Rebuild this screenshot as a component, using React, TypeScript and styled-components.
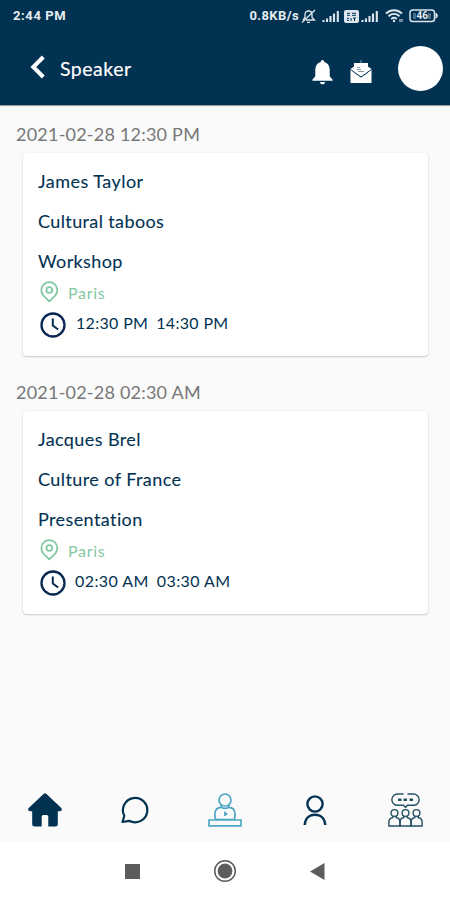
import React from "react";
import styled, { createGlobalStyle } from "styled-components";

const NAVY = "#023252";
const GREEN = "#82c9a2";

const GlobalStyle = createGlobalStyle`
  * { box-sizing: border-box; }
  body { margin: 0; background: #fafafa; }
  svg { display: block; flex: none; }
`;

const Screen = styled.div`
  width: 450px;
  height: 900px;
  display: flex;
  flex-direction: column;
  background: #fafafa;
  font-family: Lato, "Noto Sans", sans-serif;
  color: ${NAVY};
  overflow: hidden;
`;

const Header = styled.header`
  height: 105px;
  background: ${NAVY};
  color: #fff;
  box-shadow: 0 1px 1px rgba(0, 0, 0, 0.35);
  flex: none;
`;

const StatusBar = styled.div`
  height: 32px;
  padding: 0 12px 0 13px;
  display: flex;
  align-items: center;
  justify-content: space-between;
  font: 700 13px/32px Roboto, sans-serif;
  letter-spacing: 0.6px;
  color: #e6eef3;
`;

const StatusIcons = styled.div`
  display: flex;
  align-items: center;
`;

const NetworkSpeed = styled.span`
  letter-spacing: 0.4px;
  margin-right: 1px;
`;

const SignalGroup = styled.div`
  display: flex;
  align-items: center;
  gap: 2px;
  margin: 0 6px 0 5px;
`;

const WifiGroup = styled.div`
  margin-right: 5px;
`;

const Toolbar = styled.div`
  height: 73px;
  padding: 0 7px 0 30px;
  display: flex;
  align-items: center;
`;

const Title = styled.h1`
  margin: 0 0 0 15px;
  flex: 1;
  font-size: 19.5px;
  font-weight: 400;
  line-height: 24px;
  letter-spacing: 0.5px;
  -webkit-text-stroke: 0.15px #fff;
`;

const Actions = styled.div`
  display: flex;
  align-items: center;
  gap: 17px;
  padding: 7px 26px 0 0;
`;

const Avatar = styled.div`
  width: 45px;
  height: 45px;
  border-radius: 50%;
  background: #fff;
`;

const BackButton = styled.div`
  padding-bottom: 3px;
`;

const Sessions = styled.main`
  flex: 1;
  padding-top: 17px;
`;

const Session = styled.section`
  height: 258px;
`;

const DateLabel = styled.div`
  height: 31px;
  padding-left: 16px;
  font-size: 18px;
  line-height: 24px;
  letter-spacing: 0.22px;
  color: #777;
`;

const Card = styled.article`
  height: 203px;
  margin: 0 22px 0 23px;
  padding: 8px 15px 0;
  background: #fff;
  border-radius: 4px;
  box-shadow: 0 1px 2px rgba(0, 0, 0, 0.2), 0 0 2px rgba(0, 0, 0, 0.06);
`;

const CardLine = styled.div<{ $spacing: number }>`
  height: 40px;
  font-size: 18px;
  line-height: 40px;
  letter-spacing: ${(p) => p.$spacing}px;
  -webkit-text-stroke: 0.1px ${NAVY};
`;

const Place = styled.div`
  height: 22px;
  display: flex;
  align-items: center;
  gap: 8px;
  padding-left: 1px;
  color: ${GREEN};
  font-size: 16px;
  letter-spacing: 0.7px;
`;

const Times = styled.div<{ $spacing: number; $indent: number }>`
  height: 44px;
  display: flex;
  align-items: center;
  padding-left: 2px;
  font-size: 16px;
  line-height: 20px;
  letter-spacing: ${(p) => p.$spacing}px;
  white-space: nowrap;

  span { margin: 0 0 4px ${(p) => p.$indent}px; }
  span + span { margin-left: 8px; }
`;

const TabBar = styled.nav`
  height: 62px;
  padding-bottom: 2px;
  display: grid;
  grid-template-columns: repeat(5, 1fr);
  place-items: center;
  flex: none;
`;

const SystemBar = styled.footer`
  height: 58px;
  display: flex;
  align-items: center;
  justify-content: center;
  gap: 73px;
  padding-right: 1px;
  background: #fff;
  color: #5c5c5c;
  flex: none;
`;

const Signal = () => (
  <svg width="18" height="13" viewBox="0 0 18 13" stroke="#dce6ec" strokeWidth="2.1">
    <path d="M1.5 12V10M5 12V8.5M8.5 12V6M12 12V3.5M15.8 12V1" />
  </svg>
);

const MutedBell = () => (
  <svg width="17" height="15" viewBox="0 0 17 15" fill="none" stroke="#dce6ec" strokeWidth="1.3">
    <path d="M3 11 5 8.500V5.500C5 3.500 6.500 2 8.500 2S12 3.500 12 5.500v3l2.500 2.500H6M7 13.300h3M2 13.500 15 1" />
  </svg>
);

const SimBadge = () => (
  <svg width="15" height="13" viewBox="0 0 15 13">
    <rect width="15" height="13" rx="2" fill="#dce6ec" />
    <path d="M3 3.300h3M3 5.300h3M8 3.300h4M8 5.300h4M3 8.300h2M3 10.300h2M7 8v3M9 8h3M10.500 8v3" stroke={NAVY} strokeWidth="1" />
  </svg>
);

const Wifi = () => (
  <svg width="19" height="14" viewBox="0 0 19 14" fill="none" stroke="#dce6ec" strokeWidth="1.9">
    <path d="M1 4.500C5.700.2 12.300.2 17 4.500M3.500 7.300c3.300-3 7.700-3 11 0M6.200 10c1.800-1.500 3.800-1.500 5.600 0" />
    <circle cx="9" cy="12" r="1.200" fill="#dce6ec" stroke="none" />
    <path d="M15 10v3M17 10v3" strokeWidth="1" />
  </svg>
);

const Battery = () => (
  <svg width="29" height="14" viewBox="0 0 29 14">
    <rect x="1" y="1" width="24.500" height="11.500" rx="2.800" fill="none" stroke="#dce6ec" strokeWidth="1.500" />
    <path d="M27 4.200c1.700.8 1.700 4.200 0 5z" fill="#dce6ec" stroke="#dce6ec" />
    <path d="M4 4h3v6H4zM19 4h3v6h-3z" fill="#b5c7d3" opacity=".4" />
    <text x="13.200" y="10.300" textAnchor="middle" fontFamily="Roboto, sans-serif" fontSize="10" fontWeight="700" letterSpacing="0" fill="#e6eef3">46</text>
  </svg>
);

const BackIcon = () => (
  <svg width="15" height="24" viewBox="0 0 15 24" fill="none" stroke="#fff" strokeWidth="4">
    <path d="M13.300 2 3.300 12l10 10" />
  </svg>
);

const BellIcon = () => (
  <svg width="21" height="25" viewBox="0 0 21 26" fill="#fff">
    <path d="M10.500 0c1.200 0 1.800.8 1.800 2.100 3.700 1 5.700 4 5.700 7.900v6.800l3 3.700v1.200H0v-1.200l3-3.700V10c0-3.900 2-6.900 5.700-7.900C8.700.8 9.300 0 10.500 0zM8 22.800h5c0 1.600-1 2.500-2.500 2.500S8 24.400 8 22.800z" />
  </svg>
);

const MailIcon = () => (
  <svg width="22" height="24" viewBox="0 0 22 24">
    <path d="M.5 9 4 6.500V13l7 4.500 7-4.500V6.500L21.500 9v14H.5z" fill="#fff" />
    <path d="M4 3h14v10l-7 4.500L4 13z" fill="#fff" />
    <path d="M10.500 0h1v3h-1z" fill="#8aa0b0" />
    <path d="M.5 9.500 11 17 21.500 9.500" fill="none" stroke={NAVY} strokeWidth="1" />
    <path d="M7 7.500h3M7 9.500h4M8 11.500h6" stroke="#8296a3" strokeWidth="1" />
  </svg>
);

const PinIcon = () => (
  <svg width="21" height="22" viewBox="0 0 21 22" fill="none" stroke={GREEN} strokeWidth="1.800">
    <path d="M10.300 20.300 4.200 14.300a8 8 0 1 1 12.200 0z" strokeLinejoin="round" />
    <circle cx="10.300" cy="9" r="2.900" />
  </svg>
);

const ClockIcon = () => (
  <svg width="26" height="26" viewBox="0 0 26 26" fill="none" stroke="#082851">
    <circle cx="13" cy="13" r="11.500" strokeWidth="2.300" />
    <path d="M12.800 6.500v7l5.400 4" strokeWidth="2" />
  </svg>
);

const HomeIcon = () => (
  <svg width="34" height="34" viewBox="0 0 34 34" fill={NAVY}>
    <path d="M15.500.9Q17-.4 18.500.9L33 14.800q1.500 1.500.4 2.700-.7.8-2 .7h-1.600V31q0 2.500-2.500 2.500h-7v-9.700q0-1.700-1.700-1.700h-3.200q-1.700 0-1.700 1.700v9.700h-7Q4.200 33.500 4.200 31V18.200H2.600q-1.300.1-2-.7-1.100-1.200.4-2.700z" />
  </svg>
);

const ChatIcon = () => (
  <svg width="28" height="28" viewBox="0 0 28 28" fill="none" stroke={NAVY} strokeWidth="2.200">
    <path d="M3.300 19.800A12.200 12.200 0 1 1 8.200 24.800L1.500 26z" strokeLinejoin="round" />
  </svg>
);

const SpeakerIcon = () => (
  <svg width="34" height="34" viewBox="0 0 34 34" fill="none" stroke="#4da6c6" strokeWidth="1.700">
    <circle cx="17" cy="7" r="6" />
    <path d="M13.200 11.800v2.500c-4 .1-6 2.200-6.300 6.200 0 2.400-.3 4.800 1.100 6.200h18c1.400-1.400 1.100-3.800 1.100-6.200-.3-4-2.300-6.100-6.300-6.200v-2.500M13 14c2.300 1.700 5.700 1.700 8 0M1 27h32v5.800H1z" />
    <path d="M17 18.500v4.500M18.500 20v2" />
  </svg>
);

const PersonIcon = () => (
  <svg width="24" height="31" viewBox="0 0 24 31" fill="none" stroke={NAVY} strokeWidth="2.400">
    <circle cx="12" cy="9" r="7.600" />
    <path d="M1.700 30c.4-6.500 4.700-10.200 10.300-10.200S21.900 23.500 22.300 30" />
  </svg>
);

const AudienceIcon = () => (
  <svg width="35" height="34" viewBox="0 0 35 34" fill="none" stroke="#245064" strokeWidth="1.400">
    <path d="M15.500 1H9.500a5.300 5.300 0 0 0 0 11.300h6l2 2.200 2-2.200h6A5.300 5.300 0 0 0 25.500 1h-6" />
    <path d="M10 6.700h3.500M15.500 6.700H19M21.500 6.700H25" strokeWidth="2.400" />
    {[6.5, 17.5, 28.5].map((x) => (
      <g key={x} transform={`translate(${x} 0)`}>
        <circle cx="0" cy="20" r="3.400" />
        <path d="M-1.600 23v1.500c-2.500.5-4 2.200-4 4.500v4H5.600v-4c0-2.300-1.500-4-4-4.500V23" />
      </g>
    ))}
  </svg>
);

type SessionItem = {
  date: string;
  lines: { text: string; spacing: number }[];
  times: string[];
  timeSpacing: number;
  indent: number;
};

const sessions: SessionItem[] = [
  {
    date: "2021-02-28 12:30 PM",
    lines: [
      { text: "James Taylor", spacing: 0.47 },
      { text: "Cultural taboos", spacing: 0.38 },
      { text: "Workshop", spacing: 0.4 },
    ],
    times: ["12:30 PM", "14:30 PM"],
    timeSpacing: 0.32,
    indent: 10,
  },
  {
    date: "2021-02-28 02:30 AM",
    lines: [
      { text: "Jacques Brel", spacing: 0.4 },
      { text: "Culture of France", spacing: 0.42 },
      { text: "Presentation", spacing: 0.4 },
    ],
    times: ["02:30 AM", "03:30 AM"],
    timeSpacing: 0.42,
    indent: 9,
  },
];

export default function App() {
  return (
    <Screen>
      <GlobalStyle />
      <Header>
        <StatusBar>
          <span>2:44 PM</span>
          <StatusIcons>
            <NetworkSpeed>0.8KB/s</NetworkSpeed>
            <MutedBell />
            <SignalGroup>
              <Signal />
              <span />
              <SimBadge />
              <Signal />
            </SignalGroup>
            <WifiGroup><Wifi /></WifiGroup>
            <Battery />
          </StatusIcons>
        </StatusBar>
        <Toolbar>
          <BackButton><BackIcon /></BackButton>
          <Title>Speaker</Title>
          <Actions>
            <BellIcon />
            <MailIcon />
          </Actions>
          <Avatar />
        </Toolbar>
      </Header>
      <Sessions>
        {sessions.map((s) => (
          <Session key={s.date}>
            <DateLabel>{s.date}</DateLabel>
            <Card>
              {s.lines.map(({ text, spacing }) => (
                <CardLine key={text} $spacing={spacing}>{text}</CardLine>
              ))}
              <Place><PinIcon />Paris</Place>
              <Times $spacing={s.timeSpacing} $indent={s.indent}>
                <ClockIcon />
                {s.times.map((t) => <span key={t}>{t}</span>)}
              </Times>
            </Card>
          </Session>
        ))}
      </Sessions>
      <TabBar>
        <HomeIcon />
        <ChatIcon />
        <SpeakerIcon />
        <PersonIcon />
        <AudienceIcon />
      </TabBar>
      <SystemBar>
        <svg width="15" height="15"><rect width="15" height="15" fill="currentColor" /></svg>
        <svg width="24" height="24" viewBox="0 0 24 24">
          <circle cx="12" cy="12" r="10.300" fill="none" stroke="currentColor" strokeWidth="1.500" />
          <circle cx="12" cy="12" r="7.400" fill="currentColor" />
        </svg>
        <svg width="15" height="17"><path d="M0 8.500 14.500 0v17z" fill="currentColor" /></svg>
      </SystemBar>
    </Screen>
  );
}
